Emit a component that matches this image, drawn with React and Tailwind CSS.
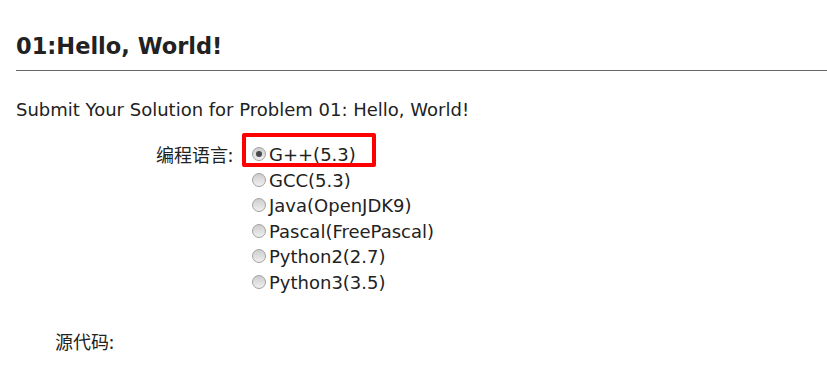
import React from 'react';

const languages = ['G++(5.3)', 'GCC(5.3)', 'Java(OpenJDK9)', 'Pascal(FreePascal)', 'Python2(2.7)', 'Python3(3.5)'];

const Radio = ({ checked }) => (
  <span className="mt-[5px] w-[14px] h-[14px] rounded-full border border-[#a2a2a2] bg-gradient-to-b from-[#cdcdcd] to-[#f0f0f0] flex items-center justify-center shrink-0">
    {checked && <span className="w-[6px] h-[6px] rounded-full bg-[#4a4a4a]" />}
  </span>
);

const App = () => {
  return (
    <div className="w-[827px] h-[373px] bg-white overflow-hidden text-[#222] font-['DejaVu_Sans','Noto_Sans_CJK_SC',sans-serif]">
      <div className="pl-4 pt-[31px]">
        <h2 className="text-[22.5px] font-bold leading-[30px]">01:Hello, World!</h2>
        <div className="mt-[9px] h-px bg-[#666]" />
        <p className="mt-[28px] text-[18px] leading-[22px]">Submit Your Solution for Problem 01: Hello, World!</p>
      </div>

      <div className="flex mt-[21px] text-[18px]">
        <div className="w-[252px] pr-[19px] text-right leading-[25.6px] font-['Noto_Sans_CJK_SC',sans-serif]">编程语言:</div>
        <div className="relative flex flex-col">
          {languages.map((lang, i) => (
            <label key={lang} className="flex items-start h-[25.6px] leading-[25.6px]">
              <Radio checked={i === 0} />
              <span className="ml-[3px]">{lang}</span>
            </label>
          ))}
          <div className="absolute left-[-10px] top-[-9px] w-[134px] h-[34px] border-4 border-[#ff0000] rounded-[2px]" />
        </div>
      </div>

      <div className="pl-[55px] mt-[32px] text-[18px] leading-[26px] font-['Noto_Sans_CJK_SC',sans-serif]">源代码:</div>
    </div>
  );
};

export default App;
